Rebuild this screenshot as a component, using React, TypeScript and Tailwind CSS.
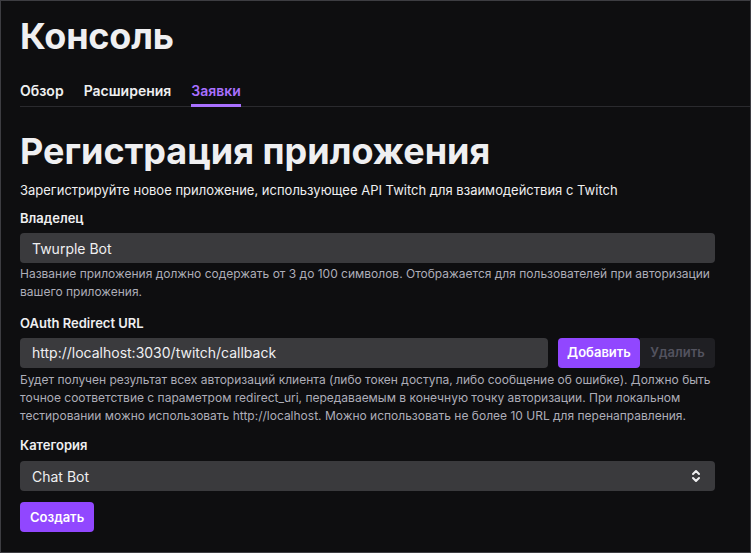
import React from "react";

const font = { fontFamily: "Inter, 'Noto Sans', sans-serif" };

function Label({ children }: { children: React.ReactNode }) {
  return <div className="text-[13px] font-semibold leading-[18px] text-[#efeff1]">{children}</div>;
}

function Help({ children }: { children: React.ReactNode }) {
  return <p className="text-[12px] leading-[18.3px] text-[#adadb8]">{children}</p>;
}

export default function App() {
  return (
    <div
      style={font}
      className="w-[751px] h-[553px] box-border border border-[#3d3d42] bg-[#0e0e10] overflow-hidden pl-[19px] text-[#efeff1]"
    >
      <h1 className="pt-[13px] text-[36px] leading-[44px] font-bold tracking-[-0.2px]">Консоль</h1>
      <div className="mt-[23px] flex gap-5 border-b border-[#2a2a2e]">
        <div className="-mb-px pb-[3px] border-b-[3px] border-transparent text-[14px] leading-[20px] font-semibold">Обзор</div>
        <div className="-mb-px pb-[3px] border-b-[3px] border-transparent text-[14px] leading-[20px] font-semibold">Расширения</div>
        <div className="-mb-px pb-[3px] border-b-[3px] border-[#a970ff] text-[14px] leading-[20px] font-semibold text-[#a970ff]">Заявки</div>
      </div>
      <div className="pr-[35px]">
        <h2 className="mt-[22px] text-[36px] leading-[44px] font-bold">Регистрация приложения</h2>
        <p className="mt-[8px] text-[13px] leading-[18px]">
          Зарегистрируйте новое приложение, использующее API Twitch для взаимодействия с Twitch
        </p>
        <div className="mt-[10px]">
          <Label>Владелец</Label>
          <div className="mt-[6px] h-[30px] rounded-[4px] bg-[#3a3a3d] flex items-center px-3 text-[14px]">
            Twurple Bot
          </div>
          <div className="mt-[2px]">
            <Help>
              Название приложения должно содержать от 3 до 100 символов. Отображается для пользователей при авторизации
              вашего приложения.
            </Help>
          </div>
        </div>
        <div className="mt-[12px]">
          <Label>OAuth Redirect URL</Label>
          <div className="mt-[6px] flex gap-[10px]">
            <div className="flex-1 h-[30px] rounded-[4px] bg-[#3a3a3d] flex items-center px-3 text-[14px]">
              http://localhost:3030/twitch/callback
            </div>
            <div className="flex">
              <button className="h-[30px] w-[82px] rounded-[4px] bg-[#9147ff] text-white text-[13px] font-semibold">
                Добавить
              </button>
              <button className="h-[30px] w-[75px] rounded-r-[4px] bg-[#1f1f23] text-[#53535f] text-[13px] font-semibold">
                Удалить
              </button>
            </div>
          </div>
          <div className="mt-[3px]">
            <Help>
              Будет получен результат всех авторизаций клиента (либо токен доступа, либо сообщение об ошибке). Должно быть
              точное соответствие с параметром redirect_uri, передаваемым в конечную точку авторизации. При локальном
              тестировании можно использовать http://localhost. Можно использовать не более 10 URL для перенаправления.
            </Help>
          </div>
        </div>
        <div className="mt-[11px]">
          <Label>Категория</Label>
          <div className="mt-[7px] h-[30px] rounded-[4px] bg-[#3a3a3d] flex items-center justify-between pl-3 pr-[14px] text-[14px]">
            <span>Chat Bot</span>
            <svg width="10" height="14" viewBox="0 0 10 14" fill="none" stroke="#efeff1" strokeWidth="2" strokeLinecap="round" strokeLinejoin="round">
              <path d="M2 5 L5 2 L8 5" />
              <path d="M2 9 L5 12 L8 9" />
            </svg>
          </div>
        </div>
        <button className="mt-[11px] h-[30px] px-[10px] rounded-[4px] bg-[#9147ff] text-white text-[13px] font-semibold">
          Создать
        </button>
      </div>
    </div>
  );
}
